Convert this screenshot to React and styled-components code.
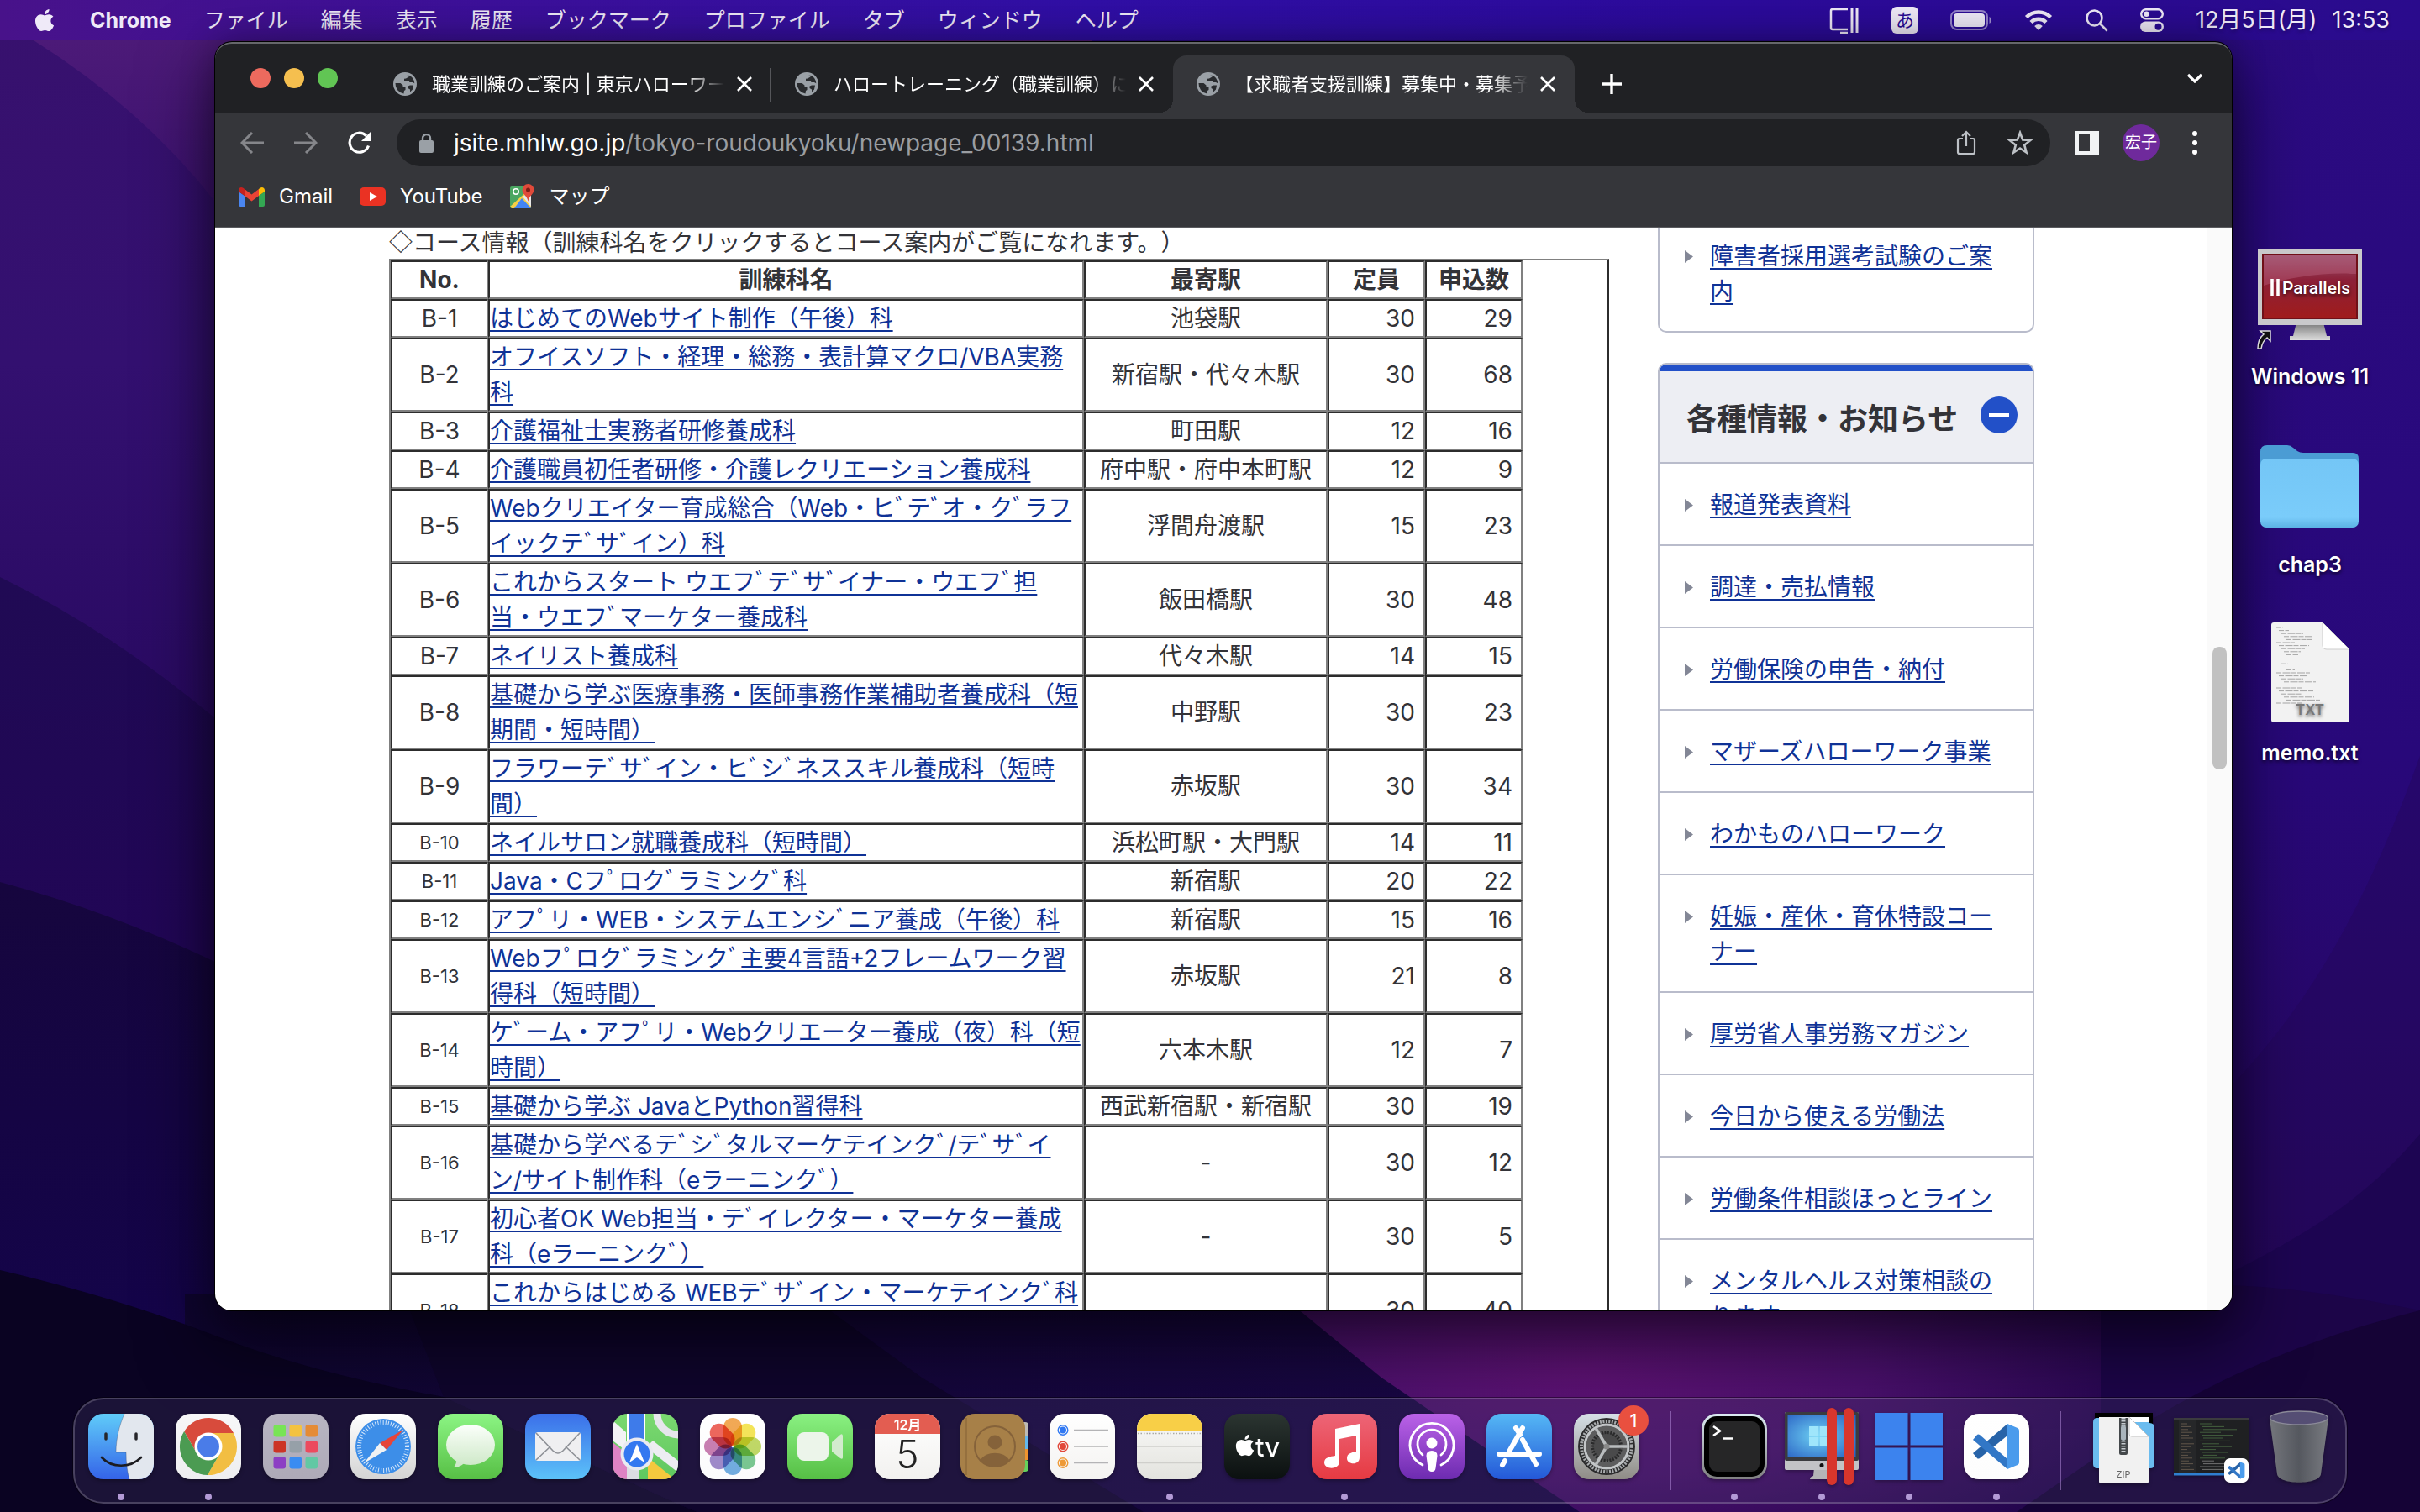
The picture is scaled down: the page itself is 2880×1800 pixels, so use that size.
import React from 'react';
import styled, { createGlobalStyle, css } from 'styled-components';
import { FaApple } from 'react-icons/fa';

const JP = `Inter, 'Noto Sans CJK JP', sans-serif`;

const GlobalStyle = createGlobalStyle`
  *, *::before, *::after { box-sizing: border-box; }
  html, body, #root { height: 100%; }
  body { margin: 0; overflow: hidden; font-family: ${JP}; text-spacing-trim: space-all; }
  button { border: 0; padding: 0; background: none; color: inherit; font: inherit; }
  svg { display: block; }
`;

/* ---------- desktop ---------- */

const Desktop = styled.div`
  position: relative;
  display: flex;
  flex-direction: column;
  height: 100vh;
  overflow: hidden;
  background: #1c0858;
`;

const WallpaperArt = styled.svg`
  position: absolute;
  inset: 0;
  width: 100%;
  height: 100%;
`;

const Workspace = styled.main`
  position: relative;
  flex: 1;
  min-height: 0;
  display: flex;
  padding: 2px 38px 0 256px;
`;

function Wallpaper() {
  return (
    <WallpaperArt viewBox="0 0 2880 1800" preserveAspectRatio="none" aria-hidden="true">
      <defs>
        <linearGradient id="wpBase" gradientUnits="userSpaceOnUse" x1="0" y1="0" x2="0" y2="860">
          <stop offset="0" stopColor="#38116e" />
          <stop offset=".5" stopColor="#331070" />
          <stop offset="1" stopColor="#290a62" />
        </linearGradient>
        <linearGradient id="wpRight" x1="0" y1="0" x2="0" y2="1">
          <stop offset="0" stopColor="#2b0b82" />
          <stop offset=".5" stopColor="#28087a" />
          <stop offset=".8" stopColor="#26075f" />
          <stop offset="1" stopColor="#1c0450" />
        </linearGradient>
        <linearGradient id="wpTop" gradientUnits="userSpaceOnUse" x1="0" y1="48" x2="0" y2="300">
          <stop offset="0" stopColor="#4c1a78" />
          <stop offset="1" stopColor="#38106e" />
        </linearGradient>
        <linearGradient id="wpMid" gradientUnits="userSpaceOnUse" x1="0" y1="690" x2="0" y2="1140">
          <stop offset="0" stopColor="#200a54" />
          <stop offset="1" stopColor="#210656" />
        </linearGradient>
        <linearGradient id="wpLow" gradientUnits="userSpaceOnUse" x1="0" y1="1050" x2="0" y2="1600">
          <stop offset="0" stopColor="#16063e" />
          <stop offset="1" stopColor="#14044a" />
        </linearGradient>
        <radialGradient id="wpMagenta" gradientUnits="userSpaceOnUse" cx="0" cy="0" r="1" gradientTransform="translate(1880 1630) scale(680 260)">
          <stop offset="0" stopColor="#5e1274" />
          <stop offset=".5" stopColor="#4a106c" />
          <stop offset="1" stopColor="#24064e" />
        </radialGradient>
        <linearGradient id="wpNavy" x1="0" y1="0" x2="1" y2="0">
          <stop offset="0" stopColor="#0f0530" />
          <stop offset="1" stopColor="#190744" />
        </linearGradient>
      </defs>
      <rect width="2880" height="1800" fill="url(#wpBase)" />
      <path d="M40 48Q170 130 256 240L1300 500V48Z" fill="url(#wpTop)" />
      <path d="M0 687Q130 750 256 855L1300 1200V1800H0Z" fill="url(#wpMid)" />
      <path d="M0 1050Q130 1085 256 1145L1300 1400V1800H0Z" fill="url(#wpLow)" />
      <rect x="1300" width="1580" height="1800" fill="url(#wpRight)" />
      <path d="M2880 900C2800 1120 2720 1250 2560 1380V1800H2880Z" fill="#240758" opacity=".4" />
      <path d="M2880 1350C2820 1420 2760 1470 2560 1560V1800H2880Z" fill="#1c0550" opacity=".8" />
      <path d="M220 1540H1543L1880 1800H220Z" fill="url(#wpNavy)" />
      <path d="M0 1512Q140 1545 256 1590T528 1663L806 1790L830 1800H0Z" fill="#0a0322" />
      <path d="M880 1540H960L1097 1640L1361 1800H830L806 1790L528 1663L480 1540Z" fill="#0f052c" />
      <path d="M1510 1530L1644 1640L1880 1800H2500V1530Z" fill="url(#wpMagenta)" />
      <path d="M2500 1530V1800H2880V1560C2780 1540 2700 1530 2640 1530Z" fill="#1c0548" />
      <path d="M2880 1560C2760 1590 2660 1630 2560 1690L2400 1800H2880Z" fill="#150336" />
    </WallpaperArt>
  );
}

/* ---------- menu bar ---------- */

const MenuBar = styled.header`
  position: relative;
  flex: none;
  display: flex;
  align-items: center;
  height: 48px;
  padding: 0 36px 0 38px;
  color: #efeaf8;
  font-size: 25px;
  line-height: 36px;
  text-shadow: 0 2px 4px rgba(0, 0, 0, 0.3);
  background: linear-gradient(90deg, #48128a 0%, #3c109a 20%, #300fa6 45%, #2c0b9c 70%, #2a0b8c 100%);
`;

const MenuList = styled.nav`
  display: flex;
  gap: 39px;
  margin-left: 39px;
`;

const MenuItem = styled.button`
  font-weight: ${(p) => (p.$strong ? 700 : 400)};
`;

const StatusArea = styled.div`
  display: flex;
  align-items: center;
  gap: 38px;
  margin-left: auto;
  white-space: nowrap;
`;

const InputSource = styled.span`
  display: grid;
  place-items: center;
  width: 32px;
  height: 32px;
  border-radius: 6px;
  background: #efeaf8;
  color: #2a0b94;
  font-size: 22px;
  line-height: 32px;
  text-shadow: none;
`;

const Clock = styled.time`
  display: flex;
  gap: 18px;
  font-size: 27px;
`;

const menus = ['ファイル', '編集', '表示', '履歴', 'ブックマーク', 'プロファイル', 'タブ', 'ウィンドウ', 'ヘルプ'];

function TopMenu() {
  return (
    <MenuBar>
      <FaApple size={30} aria-label="Apple" />
      <MenuList>
        <MenuItem $strong>Chrome</MenuItem>
        {menus.map((m) => <MenuItem key={m}>{m}</MenuItem>)}
      </MenuList>
      <StatusArea>
        <svg width="36" height="32" viewBox="0 0 36 32" fill="none" stroke="#efeaf8" strokeWidth="2.5" aria-hidden="true">
          <path d="M22 3H4a2 2 0 0 0-2 2v20a2 2 0 0 0 2 2h18M13 31h9" />
          <path d="M27 1v30M33 1v30" strokeWidth="3" />
        </svg>
        <InputSource>あ</InputSource>
        <svg width="50" height="24" viewBox="0 0 50 24" aria-hidden="true">
          <rect x="1" y="1" width="43" height="22" rx="7" fill="none" stroke="#efeaf8" strokeOpacity=".55" strokeWidth="2" />
          <rect x="4" y="4" width="37" height="16" rx="4" fill="#efeaf8" />
          <path d="M46.500 8c3 1.500 3 6.500 0 8z" fill="#efeaf8" fillOpacity=".6" />
        </svg>
        <svg width="34" height="26" viewBox="0 0 34 26" fill="none" stroke="#efeaf8" strokeWidth="4.500" aria-hidden="true">
          <path d="M2.500 9.500a20.500 20.500 0 0 1 29 0M8 15.500a12.800 12.800 0 0 1 18 0" />
          <path d="M17 25l-4.800-5a6.800 6.800 0 0 1 9.600 0z" fill="#efeaf8" stroke="none" />
        </svg>
        <svg width="28" height="28" viewBox="0 0 28 28" fill="none" stroke="#efeaf8" strokeWidth="2.600" strokeLinecap="round" aria-hidden="true">
          <circle cx="11.500" cy="11.500" r="9" />
          <path d="M18.500 18.500l7.500 7.500" />
        </svg>
        <svg width="28" height="28" viewBox="0 0 28 28" aria-hidden="true">
          <rect x="1.200" y="1.200" width="25.600" height="11" rx="5.500" fill="none" stroke="#efeaf8" strokeWidth="2.400" />
          <circle cx="7.500" cy="6.700" r="3.200" fill="#efeaf8" />
          <rect y="15.500" width="28" height="12.500" rx="6.200" fill="#efeaf8" />
          <circle cx="21.500" cy="21.700" r="4" fill="#2a0b94" />
        </svg>
        <Clock><span>12月5日(月)</span><span>13:53</span></Clock>
      </StatusArea>
    </MenuBar>
  );
}

/* ---------- browser window ---------- */

const BrowserWindow = styled.section`
  flex: 1;
  min-width: 0;
  display: flex;
  flex-direction: column;
  overflow: hidden;
  border-radius: 20px;
  background: #35363a;
  box-shadow: 0 0 0 1px #000, 0 36px 80px 10px rgba(0, 0, 0, 0.5), 0 0 40px rgba(0, 0, 0, 0.3);
`;

const TabStrip = styled.div`
  flex: none;
  display: flex;
  align-items: flex-end;
  height: 84px;
  padding-right: 32px;
  border-top: 2px solid #66676b;
  border-radius: 20px 20px 0 0;
  background: #202124;
`;

const TrafficLights = styled.div`
  display: flex;
  gap: 16px;
  align-self: center;
  padding: 0 38px 0 42px;
`;

const Light = styled.button`
  width: 24px;
  height: 24px;
  border-radius: 50%;
  background: ${(p) => p.$tone};
`;

const TabRow = styled.div`
  display: flex;
  flex: 1;
  min-width: 0;
`;

const Tab = styled.div`
  position: relative;
  display: flex;
  align-items: center;
  flex: 0 1 478px;
  min-width: 0;
  height: 68px;
  padding: 0 20px 0 28px;
  color: #fff;
  ${(p) => p.$divided && css`
    &::after {
      content: '';
      position: absolute;
      right: 0;
      top: 15px;
      width: 2px;
      height: 40px;
      background: #55565a;
    }
  `}
  ${(p) => p.$active && css`
    border-radius: 16px 16px 0 0;
    background: #35363a;
    &::before, &::after {
      content: '';
      position: absolute;
      bottom: 0;
      width: 16px;
      height: 16px;
    }
    &::before {
      left: -16px;
      background: radial-gradient(circle at 0 0, #202124 16px, #35363a 16px);
    }
    &::after {
      right: -16px;
      background: radial-gradient(circle at 100% 0, #202124 16px, #35363a 16px);
    }
  `}
`;

const TabTitle = styled.span`
  flex: 1;
  min-width: 0;
  margin: 0 12px 0 18px;
  overflow: hidden;
  white-space: nowrap;
  font-size: 22px;
  line-height: 34px;
  mask-image: linear-gradient(90deg, #000 calc(100% - 44px), transparent);
`;

const IconButton = styled.button`
  display: grid;
  place-items: center;
  flex: none;
  width: ${(p) => p.$w || 32}px;
  height: 40px;
`;

const NewTab = styled(IconButton)`
  align-self: center;
  margin-left: 20px;
`;

const TabSearch = styled(IconButton)`
  align-self: center;
`;

const Toolbar = styled.div`
  flex: none;
  display: flex;
  align-items: center;
  height: 72px;
  padding: 0 12px;
  background: #35363a;
`;

const AddressBar = styled.div`
  display: flex;
  align-items: center;
  flex: 1;
  height: 56px;
  margin: 0 12px 0 12px;
  padding: 0 4px 0 27px;
  border-radius: 28px;
  background: #202124;
  color: #9aa0a6;
  font-size: 28px;
  line-height: 40px;
`;

const Url = styled.a`
  flex: 1;
  margin-left: 24px;
  color: #9a9da1;
  text-decoration: none;
  b { font-weight: 400; color: #fff; }
`;

const Avatar = styled.button`
  flex: none;
  width: 44px;
  height: 44px;
  margin: 0 10px;
  border-radius: 50%;
  background: #6f2a9c;
  color: #fff;
  font-size: 19px;
  line-height: 44px;
`;

const Bookmarks = styled.nav`
  flex: none;
  display: flex;
  align-items: center;
  gap: 32px;
  height: 66px;
  padding: 0 28px 8px;
  border-bottom: 2px solid #5a5b5f;
  background: #35363a;
`;

const Bookmark = styled.a`
  display: flex;
  align-items: center;
  gap: 17px;
  color: #fff;
  font-size: 24px;
  line-height: 34px;
  text-decoration: none;
`;

function Globe() {
  return (
    <svg width="28" height="28" viewBox="0 0 28 28" aria-hidden="true">
      <circle cx="14" cy="14" r="14" fill="#9aa0a6" />
      <path d="M2.500 13h6l3 2.500v2.500h3v3l-1.500 1-.5 3.500A12 12 0 0 1 2.500 13zM16 3l2.500.6v2l-3.500 2-2 .2v2.400h5.500l1 1.800h3.500l2.300 1.200a12 12 0 0 0-8-10.300zM20 15.500l-2.500 1v2.500l2.500 1.500v3l3-3 1-5z" fill="#202124" opacity=".92" />
    </svg>
  );
}

function Cross() {
  return (
    <svg width="18" height="18" viewBox="0 0 18 18" stroke="#fff" strokeWidth="2.600" aria-hidden="true">
      <path d="M1 1l16 16M17 1L1 17" />
    </svg>
  );
}

const tabs = [
  { title: '職業訓練のご案内 | 東京ハローワーク', divided: true },
  { title: 'ハロートレーニング（職業訓練）に' },
  { title: '【求職者支援訓練】募集中・募集予', active: true },
];

function BrowserChrome() {
  return (
    <>
      <TabStrip>
        <TrafficLights>
          <Light $tone="#ed6a5e" aria-label="閉じる" />
          <Light $tone="#f5bf4f" aria-label="しまう" />
          <Light $tone="#61c554" aria-label="拡大" />
        </TrafficLights>
        <TabRow>
          {tabs.map((t) => (
            <Tab key={t.title} $active={t.active} $divided={t.divided}>
              <Globe />
              <TabTitle>{t.title}</TabTitle>
              <IconButton $w={24} aria-label="タブを閉じる"><Cross /></IconButton>
            </Tab>
          ))}
          <NewTab $w={48} aria-label="新しいタブ">
            <svg width="24" height="24" viewBox="0 0 24 24" stroke="#fff" strokeWidth="3.400" aria-hidden="true">
              <path d="M12 0v24M0 12h24" />
            </svg>
          </NewTab>
        </TabRow>
        <TabSearch $w={24} aria-label="タブを検索">
          <svg width="20" height="12" viewBox="0 0 20 12" fill="none" stroke="#fff" strokeWidth="3.200" aria-hidden="true">
            <path d="M2 2l8 8 8-8" />
          </svg>
        </TabSearch>
      </TabStrip>
      <Toolbar>
        <IconButton $w={64} aria-label="戻る">
          <svg width="28" height="26" viewBox="0 0 28 26" fill="none" stroke="#85868a" strokeWidth="3" aria-hidden="true">
            <path d="M28 13H3M14 1L2 13l12 12" />
          </svg>
        </IconButton>
        <IconButton $w={64} aria-label="進む">
          <svg width="28" height="26" viewBox="0 0 28 26" fill="none" stroke="#85868a" strokeWidth="3" aria-hidden="true">
            <path d="M0 13h25M14 1l12 12-12 12" />
          </svg>
        </IconButton>
        <IconButton $w={64} aria-label="再読み込み">
          <svg width="28" height="28" viewBox="0 0 28 28" fill="none" stroke="#fff" strokeWidth="3.200" aria-hidden="true">
            <path d="M24.500 17.500a11.500 11.500 0 1 1-2.600-11.800" />
            <path d="M27 1v11H16z" fill="#fff" stroke="none" />
          </svg>
        </IconButton>
        <AddressBar>
          <svg width="17" height="23" viewBox="0 0 17 23" aria-hidden="true">
            <rect y="8" width="17" height="15" rx="2" fill="#9aa0a6" />
            <path d="M4 9V5.500a4.500 4.500 0 0 1 9 0V9" fill="none" stroke="#9aa0a6" strokeWidth="2.400" />
          </svg>
          <Url href="#"><b>jsite.mhlw.go.jp</b>/tokyo-roudoukyoku/newpage_00139.html</Url>
          <IconButton $w={64} aria-label="共有">
            <svg width="24" height="30" viewBox="0 0 24 30" fill="none" stroke="#bdc1c6" strokeWidth="2.200" aria-hidden="true">
              <path d="M8 10H4a2 2 0 0 0-2 2v14a2 2 0 0 0 2 2h16a2 2 0 0 0 2-2V12a2 2 0 0 0-2-2h-4M12 19V2M7 7l5-5 5 5" />
            </svg>
          </IconButton>
          <IconButton $w={64} aria-label="ブックマークに追加">
            <svg width="30" height="30" viewBox="0 0 30 30" fill="none" stroke="#bdc1c6" strokeWidth="2.600" aria-hidden="true">
              <path d="M15 3l3.200 8.600 9.200.4-7.200 5.700 2.400 8.900L15 21.500l-7.600 5.100 2.400-8.900L2.600 12l9.200-.4z" />
            </svg>
          </IconButton>
        </AddressBar>
        <IconButton $w={64} aria-label="サイドパネル">
          <svg width="28" height="28" viewBox="0 0 28 28" aria-hidden="true">
            <path d="M0 0h28v28H0zM4 4v20h13V4z" fill="#f1f3f4" fillRule="evenodd" />
          </svg>
        </IconButton>
        <Avatar>宏子</Avatar>
        <IconButton $w={64} aria-label="メニュー">
          <svg width="6" height="28" viewBox="0 0 6 28" fill="#fff" aria-hidden="true">
            <circle cx="3" cy="3" r="3" /><circle cx="3" cy="14" r="3" /><circle cx="3" cy="25" r="3" />
          </svg>
        </IconButton>
      </Toolbar>
      <Bookmarks>
        <Bookmark href="#">
          <svg width="31" height="23" viewBox="0 0 31 23" aria-hidden="true">
            <path d="M0 5v16a2 2 0 0 0 2 2h5V10z" fill="#4a86f0" />
            <path d="M31 5v16a2 2 0 0 1-2 2h-5V10z" fill="#34a853" />
            <path d="M24 2v8l7-5V3.500C31 .5 28-1 25.600.800z" fill="#fbbc04" />
            <path d="M7 10V2l8.500 6.400L24 2v8l-8.500 6.500z" fill="#ea4335" />
            <path d="M0 3.500V5l7 5V2L5.400.800C3-1 0 .5 0 3.500z" fill="#c5221f" />
          </svg>
          Gmail
        </Bookmark>
        <Bookmark href="#">
          <svg width="31" height="22" viewBox="0 0 31 22" aria-hidden="true">
            <rect width="31" height="22" rx="5" fill="#ea3223" />
            <path d="M12 6l9 5-9 5z" fill="#fff" />
          </svg>
          YouTube
        </Bookmark>
        <Bookmark href="#">
          <svg width="30" height="30" viewBox="0 0 30 30" aria-hidden="true">
            <rect x="1" y="3" width="25" height="26" rx="2" fill="#4ba661" />
            <path d="M1 27L24 6l2 2v20l-1 1H3z" fill="#f6cf46" />
            <path d="M6 29l9-12 11 12z" fill="#4285f4" />
            <path d="M16 15l10-6v18z" fill="#e8e8e8" />
            <circle cx="8" cy="9" r="3.200" fill="none" stroke="#fff" strokeWidth="1.600" />
            <path d="M22.500 0a7 7 0 0 1 7 7c0 5-6 7-7 14-1-7-7-9-7-14a7 7 0 0 1 7-7z" fill="#e04a3a" />
            <circle cx="22.500" cy="7" r="2.500" fill="#7c1f17" />
          </svg>
          マップ
        </Bookmark>
      </Bookmarks>
    </>
  );
}

/* ---------- web page ---------- */

const Viewport = styled.div`
  flex: 1;
  min-height: 0;
  display: flex;
  background: #fff;
`;

const Scroller = styled.div`
  flex: 1;
  min-width: 0;
  overflow: hidden;
`;

const ScrollTrack = styled.div`
  flex: none;
  width: 30px;
  padding: 498px 6px 0;
  border-left: 1px solid #e4e4e4;
  background: #fafafa;
`;

const ScrollThumb = styled.div`
  height: 146px;
  border-radius: 8px;
  background: #c1c1c1;
`;

const Page = styled.div`
  display: flex;
  gap: 58px;
  margin: -16px 205px 0 207px;
  color: #333338;
  font-size: 28px;
  line-height: 42px;
`;

const Article = styled.article`
  flex: 1;
  min-width: 0;
  padding-top: 10px;
  white-space: nowrap;
`;

const Lead = styled.p`
  margin: 0;
  font-family: 'Noto Sans CJK JP', sans-serif;
`;

const CourseTable = styled.table`
  width: 100%;
  table-layout: fixed;
  border-spacing: 0;
  border: 2px solid;
  border-color: #808080 #2c2c2c #2c2c2c #808080;
  th, td {
    padding: 0;
    border: 2px solid;
    border-color: #2c2c2c #808080 #808080 #2c2c2c;
    text-align: center;
  }
`;

const Col = styled.col`
  width: ${(p) => (p.$w ? `${p.$w}px` : 'auto')};
`;

const NumberCell = styled.td`
  font-size: ${(p) => (p.$small ? 22 : 28)}px;
`;

const NameCell = styled.td`
  && { text-align: left; }
  white-space: pre;
`;

const CountCell = styled.td`
  && { padding-right: 10px; text-align: right; }
`;

const Link = styled.a`
  color: #0f3296;
  text-decoration: underline;
  text-decoration-thickness: 2px;
  text-underline-offset: 4px;
`;

const courses = [
  ['はじめてのWebサイト制作（午後）科', '池袋駅', 30, 29],
  ['オフイスソフト・経理・総務・表計算マクロ/VBA実務\n科', '新宿駅・代々木駅', 30, 68],
  ['介護福祉士実務者研修養成科', '町田駅', 12, 16],
  ['介護職員初任者研修・介護レクリエーション養成科', '府中駅・府中本町駅', 12, 9],
  ['Webクリエイター育成総合（Web・ヒﾞテﾞオ・クﾞラフ\nイックテﾞサﾞイン）科', '浮間舟渡駅', 15, 23],
  ['これからスタート ウエフﾞテﾞサﾞイナー・ウエフﾞ担\n当・ウエフﾞマーケター養成科', '飯田橋駅', 30, 48],
  ['ネイリスト養成科', '代々木駅', 14, 15],
  ['基礎から学ぶ医療事務・医師事務作業補助者養成科（短\n期間・短時間）', '中野駅', 30, 23],
  ['フラワーテﾞサﾞイン・ヒﾞシﾞネススキル養成科（短時\n間）', '赤坂駅', 30, 34],
  ['ネイルサロン就職養成科（短時間）', '浜松町駅・大門駅', 14, 11],
  ['Java・Cフﾟロクﾞラミンクﾞ科', '新宿駅', 20, 22],
  ['アフﾟリ・WEB・システムエンシﾞニア養成（午後）科', '新宿駅', 15, 16],
  ['Webフﾟロクﾞラミンクﾞ主要4言語+2フレームワーク習\n得科（短時間）', '赤坂駅', 21, 8],
  ['ケﾞーム・アフﾟリ・Webクリエーター養成（夜）科（短\n時間）', '六本木駅', 12, 7],
  ['基礎から学ぶ JavaとPython習得科', '西武新宿駅・新宿駅', 30, 19],
  ['基礎から学べるテﾞシﾞタルマーケテインクﾞ/テﾞサﾞイ\nン/サイト制作科（eラーニンクﾞ）', '-', 30, 12],
  ['初心者OK Web担当・テﾞイレクター・マーケター養成\n科（eラーニンクﾞ）', '-', 30, 5],
  ['これからはじめる WEBテﾞサﾞイン・マーケテインクﾞ科\n（eラーニンクﾞ）', '-', 30, 40],
];

const Sidebar = styled.aside`
  flex: none;
  width: 448px;
  display: flex;
  flex-direction: column;
  gap: 36px;
`;

const Card = styled.section`
  overflow: hidden;
  border: 2px solid #b9bccb;
  border-radius: 10px;
  ${(p) => p.$continued && css`
    border-top: 0;
    border-radius: 0 0 10px 10px;
  `}
`;

const CardHeader = styled.div`
  display: flex;
  align-items: center;
  justify-content: space-between;
  height: 118px;
  padding: 0 18px 4px 32px;
  border-top: 8px solid #2250c8;
  border-bottom: 2px solid #b9bccb;
  background: #edeef3;
`;

const CardTitle = styled.h2`
  margin: 0;
  padding-top: 10px;
  font-size: 36px;
  line-height: 54px;
  white-space: nowrap;
`;

const Collapse = styled.button`
  display: grid;
  place-items: center;
  width: 44px;
  height: 44px;
  border-radius: 50%;
  background: #2250c8;
`;

const LinkList = styled.ul`
  margin: 0;
  padding: 0;
  list-style: none;
`;

const LinkItem = styled.li`
  display: flex;
  gap: 20px;
  padding: 28px 28px 26px 30px;
  & + & { border-top: 2px solid #b9bccb; }
  svg { flex: none; margin-top: 14px; }
`;

const notices = [
  '報道発表資料', '調達・売払情報', '労働保険の申告・納付', 'マザーズハローワーク事業', 'わかものハローワーク',
  '妊娠・産休・育休特設コーナー', '厚労省人事労務マガジン', '今日から使える労働法', '労働条件相談ほっとライン',
  'メンタルヘルス対策相談のります',
];

function SideLink({ children }) {
  return (
    <LinkItem>
      <svg width="10" height="15" viewBox="0 0 10 15" aria-hidden="true"><path d="M0 0l10 7.500L0 15z" fill="#838796" /></svg>
      <Link href="#">{children}</Link>
    </LinkItem>
  );
}

function WebPage() {
  return (
    <Viewport>
      <Scroller>
        <Page>
          <Article>
            <Lead>◇コース情報（訓練科名をクリックするとコース案内がご覧になれます。）</Lead>
            <CourseTable>
              <colgroup>
                <Col $w={116} /><Col $w={709} /><Col $w={290} /><Col $w={116} /><Col $w={116} /><Col />
              </colgroup>
              <thead>
                <tr><th>No.</th><th>訓練科名</th><th>最寄駅</th><th>定員</th><th>申込数</th></tr>
              </thead>
              <tbody>
                {courses.map(([name, station, seats, applied], i) => (
                  <tr key={name}>
                    <NumberCell $small={i > 8}>B-{i + 1}</NumberCell>
                    <NameCell><Link href="#">{name}</Link></NameCell>
                    <td>{station}</td>
                    <CountCell>{seats}</CountCell>
                    <CountCell>{applied}</CountCell>
                  </tr>
                ))}
              </tbody>
            </CourseTable>
          </Article>
          <Sidebar>
            <Card $continued>
              <LinkList><SideLink>障害者採用選考試験のご案内</SideLink></LinkList>
            </Card>
            <Card>
              <CardHeader>
                <CardTitle>各種情報・お知らせ</CardTitle>
                <Collapse aria-label="折りたたむ">
                  <svg width="24" height="4" viewBox="0 0 24 4" aria-hidden="true"><path d="M0 0h24v4H0z" fill="#fff" /></svg>
                </Collapse>
              </CardHeader>
              <LinkList>{notices.map((n) => <SideLink key={n}>{n}</SideLink>)}</LinkList>
            </Card>
          </Sidebar>
        </Page>
      </Scroller>
      <ScrollTrack><ScrollThumb /></ScrollTrack>
    </Viewport>
  );
}

/* ---------- desktop files ---------- */

const FileColumn = styled.div`
  flex: none;
  width: 186px;
  display: flex;
  flex-direction: column;
  align-items: center;
  gap: 48px;
  padding-top: 238px;
`;

const DesktopFile = styled.button`
  display: flex;
  flex-direction: column;
  align-items: center;
  gap: 16px;
  color: #fff;
  font-size: 25px;
  font-weight: 600;
  line-height: 32px;
  text-shadow: 0 2px 4px rgba(0, 0, 0, 0.7);
`;

function ParallelsMonitor() {
  return (
    <svg width="128" height="128" viewBox="0 0 128 128" aria-hidden="true">
      <defs>
        <linearGradient id="pmScreen" x1="0" y1="0" x2="0" y2="1">
          <stop offset="0" stopColor="#94506c" /><stop offset=".4" stopColor="#8c2038" /><stop offset="1" stopColor="#a01c1c" />
        </linearGradient>
        <linearGradient id="pmStand" x1="0" y1="0" x2="0" y2="1">
          <stop offset="0" stopColor="#777" /><stop offset="1" stopColor="#ddd" />
        </linearGradient>
      </defs>
      <path d="M48 96h32l4 16h4v5H40v-5h4z" fill="url(#pmStand)" />
      <rect x="2" y="8" width="124" height="91" fill="#c9c9cb" />
      <rect x="7" y="14" width="114" height="78" fill="#701018" />
      <rect x="9" y="16" width="110" height="74" fill="url(#pmScreen)" />
      <path d="M9 16h110v22C80 36 40 42 9 52z" fill="#c8708c" opacity=".35" />
      <path d="M19 44v20M26 44v20" stroke="#fff" strokeWidth="3.500" />
      <text x="31" y="62" fill="#fff" fontFamily="Roboto, sans-serif" fontWeight="500" fontSize="21">Parallels</text>
      <path d="M2 127c0-9 3-14 7-17l-4-4h12v12l-4-4c-4 3-6 7-7 13z" fill="#111" stroke="#ddd" strokeWidth="1.500" />
    </svg>
  );
}

function Folder() {
  return (
    <svg width="128" height="128" viewBox="0 0 128 128" aria-hidden="true">
      <defs>
        <linearGradient id="fdFront" x1="0" y1="0" x2="0" y2="1">
          <stop offset="0" stopColor="#74c6f6" /><stop offset=".85" stopColor="#7accfa" /><stop offset="1" stopColor="#5cb2e4" />
        </linearGradient>
      </defs>
      <path d="M5 26q0-8 8-8h24q4 0 7 3l5 4q3 2 7 2h59q7 0 7 7v66H5z" fill="#4b9cd4" />
      <rect x="5" y="34" width="117" height="82" rx="7" fill="url(#fdFront)" />
    </svg>
  );
}

function TextFile() {
  const widths = [8, 12, 26, 34, 30, 22, 36, 28, 20, 14, 0, 0, 8, 0, 10, 40, 34, 26, 38, 0, 30, 42, 24, 36, 40, 30, 0, 0, 0];
  return (
    <svg width="128" height="128" viewBox="0 0 128 128" aria-hidden="true">
      <path d="M18 8q0-3 3-3h58l32 32v84q0 3-3 3H21q-3 0-3-3z" fill="#f2f2f2" />
      {widths.map((w, i) => <path key={i} d={`M${24 + (i % 5) * 3} ${11 + i * 3.6}h${w}`} stroke="#a4a4a4" strokeWidth="1" strokeDasharray="6 1.500 9 1" />)}
      <path d="M79 5l32 32H84q-5 0-5-5z" fill="#fff" stroke="#ccc" />
      <text x="64" y="115" textAnchor="middle" fill="#777" fontFamily="Inter, sans-serif" fontSize="17">TXT</text>
    </svg>
  );
}

/* ---------- dock ---------- */

const DockArea = styled.footer`
  position: relative;
  flex: none;
  display: flex;
  justify-content: center;
  padding: 104px 0 10px;
`;

const DockShelf = styled.div`
  display: flex;
  height: 126px;
  padding: 0 3px;
  border: 2px solid rgba(255, 255, 255, 0.2);
  border-radius: 36px;
  background: rgba(70, 55, 105, 0.3);
  box-shadow: 0 0 0 1px rgba(0, 0, 0, 0.4);
`;

const DockItem = styled.button`
  position: relative;
  display: flex;
  justify-content: center;
  width: 104px;
  padding-top: 17px;
  svg { overflow: visible; filter: drop-shadow(0 2px 2px rgba(0, 0, 0, 0.3)); }
  ${(p) => p.$running && css`
    &::after {
      content: '';
      position: absolute;
      bottom: 2px;
      left: 48px;
      width: 8px;
      height: 8px;
      border-radius: 50%;
      background: #b39ad6;
    }
  `}
`;

const Badge = styled.span`
  position: absolute;
  top: 7px;
  right: 2px;
  width: 36px;
  height: 36px;
  border-radius: 50%;
  background: #e9503f;
  color: #fff;
  font-size: 22px;
  line-height: 36px;
`;

const DockDivider = styled.hr`
  width: 2px;
  height: 94px;
  margin: 14px 23px;
  border: 0;
  background: rgba(190, 150, 230, 0.5);
`;

function Tile({ id, from, to, children }) {
  return (
    <svg width="78" height="78" viewBox="0 0 78 78" aria-hidden="true">
      <defs>
        <linearGradient id={`${id}G`} x1="0" y1="0" x2="0" y2="1">
          <stop offset="0" stopColor={from} /><stop offset="1" stopColor={to} />
        </linearGradient>
        <clipPath id={`${id}C`}><rect width="78" height="78" rx="18" /></clipPath>
      </defs>
      <g clipPath={`url(#${id}C)`}>
        <rect width="78" height="78" fill={`url(#${id}G)`} />
        {children}
      </g>
    </svg>
  );
}

const Finder = () => (
  <Tile id="finder" from="#60ccf9" to="#3463e8">
    <path d="M43 0C37 14 33 30 33 46h12c0 12 1 22 4 32h29V0z" fill="#e2e7ee" />
    <path d="M43 0C37 14 33 30 33 46h12c0 12 1 22 4 32" fill="none" stroke="#3b4a66" strokeOpacity=".35" />
    <path d="M21 24v6M57 24v6" stroke="#26262a" strokeWidth="3.500" strokeLinecap="round" />
    <path d="M16 52c12 13 34 13 47 0" fill="none" stroke="#1c1c20" strokeWidth="2.600" strokeLinecap="round" />
  </Tile>
);

const Chrome = () => (
  <Tile id="chrome" from="#f7f7f8" to="#eeeef0">
    <g transform="translate(39 39)">
      <path d="M-28.900-18A34 34 0 0 1 30-16L0-16 0 0-13.900 8z" fill="#d84b3c" />
      <path d="M30-16A34 34 0 0 1-1.100 34L13.900 8 0 0 0-16z" fill="#f2be42" />
      <path d="M-1.100 34A34 34 0 0 1-28.900-18L-13.900 8 0 0 13.900 8z" fill="#4b9b52" />
      <circle r="16.500" fill="#fff" /><circle r="13" fill="#4a7ce8" />
    </g>
  </Tile>
);

const padColors = ['#78e455', '#f3c240', '#e58b35', '#cc3426', '#96a0a8', '#ec4a5e', '#8c3ec4', '#3a8cf2', '#62c8a4'];
const Launchpad = () => (
  <Tile id="pad" from="#b8b5c2" to="#aeaab8">
    {padColors.map((c, i) => <rect key={c} x={12.500 + (i % 3) * 19} y={13 + Math.floor(i / 3) * 19} width="14.500" height="14.500" rx="3" fill={c} />)}
  </Tile>
);

const Safari = () => (
  <Tile id="safari" from="#fff" to="#d4d4d4">
    <circle cx="39" cy="39" r="33" fill="#3d8ee8" />
    <circle cx="39" cy="39" r="28.500" fill="none" stroke="#fff" strokeOpacity=".8" strokeWidth="5" strokeDasharray="1 2.110" />
    <path d="M63 19L43 43l-8-8z" fill="#e5453a" /><path d="M16 59L35 35l8 8z" fill="#f1f2f3" />
  </Tile>
);

const Messages = () => (
  <Tile id="msg" from="#8cf584" to="#57bf45">
    <defs>
      <linearGradient id="msgB" x1="0" y1="0" x2="0" y2="1"><stop offset="0" stopColor="#fbfffa" /><stop offset="1" stopColor="#cfe9c9" /></linearGradient>
    </defs>
    <path d="M22 52c1 6-1 9-3 12 6 0 11-3 14-7z" fill="#cfe9c9" />
    <ellipse cx="39" cy="37" rx="29" ry="24" fill="url(#msgB)" />
  </Tile>
);

const Mail = () => (
  <Tile id="mail" from="#3b6fe9" to="#5cc2f9">
    <rect x="12" y="22" width="54" height="34" rx="3" fill="#efeff1" />
    <path d="M13 23l20 21q6 6 12 0l20-21M13 55l17-16M65 55L48 39" fill="none" stroke="#8d9096" strokeWidth="1.600" />
  </Tile>
);

const Maps = () => (
  <Tile id="maps" from="#7bd970" to="#5fc75f">
    <path d="M0 8l16 14v22L0 32z" fill="#f3f3f5" /><path d="M0 34l17 14v30H0z" fill="#de83c4" />
    <path d="M17 60h14v18H17z" fill="#dcdde3" /><path d="M42 52l32 26H42z" fill="#f4c83e" />
    <path d="M17 0h22v60H17z" fill="#fff" /><path d="M20 0h17v60H20z" fill="#3e7bea" />
    <path d="M40 40l38 30v-14L48 32z" fill="#ededf2" />
    <circle cx="78" cy="0" r="25" fill="none" stroke="#e6e6ec" strokeWidth="9" />
    <circle cx="29" cy="48" r="19.500" fill="#e9eaf1" /><circle cx="29" cy="48" r="15.500" fill="#3478f0" />
    <path d="M29 36l9 22-9-6-9 6z" fill="#fff" />
  </Tile>
);

const petals = ['#f09a37', '#f2e13c', '#b6d34c', '#63c07f', '#5aa0dc', '#8f76c2', '#c068a4', '#ea4c40'];
const Petal = styled.rect`
  mix-blend-mode: multiply;
`;
const Photos = () => (
  <Tile id="photos" from="#fff" to="#fbfbfc">
    {petals.map((c, i) => <Petal key={c} x="28" y="5" width="22" height="33" rx="11" fill={c} opacity=".85" transform={`rotate(${i * 45} 39 39)`} />)}
  </Tile>
);

const FaceTime = () => (
  <Tile id="ft" from="#8af182" to="#56bf45">
    <rect x="12" y="22" width="37" height="34" rx="8" fill="#ecf5ea" />
    <path d="M53 34l10-9q3-2 3 2v25q0 3-3 1l-10-8z" fill="#d2ebcd" />
  </Tile>
);

const Calendar = () => (
  <Tile id="cal" from="#fff" to="#f2f1ef">
    <rect width="78" height="24" fill="#e35d51" />
    <text x="39" y="19" textAnchor="middle" fill="#fff" fontFamily={JP} fontWeight="600" fontSize="16">12月</text>
    <text x="39" y="65" textAnchor="middle" fill="#222" fontFamily="Inter, sans-serif" fontWeight="300" fontSize="46">5</text>
  </Tile>
);

const Contacts = () => (
  <svg width="84" height="78" viewBox="0 0 84 78" aria-hidden="true">
    <rect x="66" y="10" width="16" height="17" rx="4" fill="#bdbab4" /><rect x="66" y="27" width="16" height="15" fill="#62b8ee" />
    <rect x="66" y="42" width="16" height="13" fill="#f0932e" /><rect x="66" y="55" width="16" height="14" rx="4" fill="#65d15c" />
    <rect x="1" width="77" height="78" rx="17" fill="#a78048" />
    <path d="M8 5v68" stroke="#8f6b3b" strokeWidth="1.500" />
    <circle cx="42" cy="39" r="24" fill="none" stroke="#85623a" strokeWidth="2" />
    <circle cx="42" cy="34" r="8.500" fill="#85623a" /><path d="M25 55c6-11 28-11 34 0-8 10-26 10-34 0z" fill="#85623a" />
  </svg>
);

const Reminders = () => (
  <Tile id="rem" from="#fff" to="#f4f3f1">
    {['#3078f2', '#e2473a', '#ee9a37'].map((c, i) => (
      <g key={c} transform={`translate(0 ${19.500 + i * 19.500})`}>
        <circle cx="16" r="5.800" fill="none" stroke={c} strokeWidth="1.400" /><circle cx="16" r="4" fill={c} />
        <path d="M29 0h41" stroke="#b4b4b6" strokeWidth="1.600" />
      </g>
    ))}
  </Tile>
);

const Notes = () => (
  <Tile id="notes" from="#fafaf9" to="#e3e3de">
    <rect width="78" height="20" fill="#f8cf47" /><path d="M0 20.500h78" stroke="#a58d3c" />
    <path d="M1 23.500h77" stroke="#a9a9a5" strokeWidth="1.400" strokeDasharray="1.500 2" />
    <path d="M0 39h78M0 58.500h78" stroke="#cfcfcb" strokeWidth="1.600" />
  </Tile>
);

const AppleTv = () => (
  <Tile id="tv" from="#2b3531" to="#0b1010">
    <FaApple x="10" y="23" size={29} color="#fff" />
    <text x="37" y="51" fill="#fff" fontFamily="Inter, sans-serif" fontWeight="500" fontSize="31">tv</text>
  </Tile>
);

const Music = () => (
  <Tile id="music" from="#ed6577" to="#e63a42">
    <path d="M28 18l29-6v40c0 10-15 9-15 1 0-6 6-7 11-8V26l-20 4v27c0 10-18 10-18 1 0-6 7-7 13-8z" fill="#fff" />
  </Tile>
);

const Podcasts = () => (
  <Tile id="pod" from="#bb62e8" to="#6d2bb0">
    <g fill="none" stroke="#fff" strokeWidth="2.800" strokeLinecap="round">
      <path d="M28 61a26 26 0 1 1 22 0" /><path d="M28 49a17 17 0 1 1 22 0" />
    </g>
    <circle cx="39" cy="35" r="6.500" fill="#fff" /><path d="M32.500 50q0-6 6.500-6t6.500 6l-2 15q-.5 4-4.500 4t-4.500-4z" fill="#fff" />
  </Tile>
);

const AppStore = () => (
  <Tile id="store" from="#55b8f5" to="#2458d8">
    <g stroke="#fff" strokeWidth="6" strokeLinecap="round">
      <path d="M43 17L27 45M35 17l5 8M43 31l16 29M15 48h48" /><path d="M22 56l-3 5" />
    </g>
  </Tile>
);

const Settings = () => (
  <Tile id="set" from="#d6dfe6" to="#8f8c86">
    <circle cx="39" cy="39" r="34" fill="#2b2b2c" />
    <circle cx="39" cy="39" r="30" fill="none" stroke="#a8abad" strokeWidth="4" strokeDasharray="2 1.500" />
    <circle cx="39" cy="39" r="26" fill="#5d5d5e" stroke="#c3c6c8" strokeWidth="3" />
    <circle cx="39" cy="39" r="17" fill="#4a4a4b" stroke="#2a2a2b" strokeWidth="4" strokeDasharray="2 1.500" />
    <path d="M39 39h26M39 39L26 17M39 39L26 61" stroke="#b9bcbe" strokeWidth="3.500" />
    <circle cx="39" cy="39" r="3.500" fill="#888" />
  </Tile>
);

const Terminal = () => (
  <Tile id="term" from="#dcebf2" to="#7f7f80">
    <rect x="3" y="3" width="72" height="72" rx="15" fill="#000" /><rect x="9" y="9" width="60" height="60" rx="9" fill="#262627" />
    <path d="M14 15l8 5.500-8 5.500M26 29.500h11" fill="none" stroke="#fff" strokeWidth="2.600" />
  </Tile>
);

const WinPanes = ({ x, y, s, fill }) => (
  <g fill={fill} transform={`translate(${x} ${y}) scale(${s})`}>
    <path d="M0 0h38.500v38.500H0zM41.500 0H80v38.500H41.500zM0 41.500h38.500V80H0zM41.500 41.500H80V80H41.500z" />
  </g>
);

const Parallels = () => (
  <svg width="88" height="78" viewBox="0 0 88 78" aria-hidden="true">
    <defs>
      <radialGradient id="parG" cx=".45" cy=".5" r=".7"><stop offset="0" stopColor="#6fd3f4" /><stop offset="1" stopColor="#2a62c4" /></radialGradient>
    </defs>
    <path d="M35 64h22l2 14H30q0-3 4-4z" fill="#b4b4b6" />
    <rect y="-2" width="88" height="69" rx="2" fill="#c2c3c6" /><rect y="-2" width="88" height="58" rx="2" fill="#3a3b3f" />
    <rect x="3.500" y="1" width="81" height="51" fill="url(#parG)" />
    <WinPanes x="29" y="15" s={0.3} fill="#9fe6fb" />
    <circle cx="44" cy="61.500" r="2.500" fill="#111" />
    <rect x="50" y="-7" width="12" height="92" rx="6" fill="#d8362c" /><rect x="70" y="-7" width="12" height="92" rx="6" fill="#d8362c" />
  </svg>
);

const Windows = () => (
  <svg width="80" height="80" viewBox="0 0 80 80" aria-hidden="true"><WinPanes x="0" y="-1" s={1} fill="#3c83ee" /></svg>
);

const VsLogo = () => (
  <g>
    <path d="M11 47l5 6q1 1 3 0L52 26V12z" fill="#2763a8" />
    <path d="M11 31l5-6q1-1 3 0l33 29v12z" fill="#3277c6" />
    <path d="M52 12l12 5q2 1 2 3v38q0 2-2 3l-12 5q-1 .5-1-1V13q0-1 1-1z" fill="#4a9bec" />
  </g>
);

const VsCode = () => <Tile id="vs" from="#fff" to="#fdfdfd"><VsLogo /></Tile>;

const Zip = () => (
  <svg width="74" height="84" viewBox="0 0 74 84" aria-hidden="true">
    <path d="M2-1h69v20H2z" fill="#000" />
    <path d="M0 10q0-5 5-5h62v6q6 0 6 6v43q0 5-5 5H5q-5 0-5-5z" fill="#6bbcef" />
    <path d="M2-1h69v11H66V4H7V-1z" fill="#000" /><path d="M7 4h59v6H7z" fill="#fff" />
    <path d="M7 6q0-2 2-2h34l23 23v54q0 2-2 2H9q-2 0-2-2z" fill="#f1f1f1" />
    <path d="M43 4l23 23H46q-3 0-3-3z" fill="#fff" stroke="#c6c6c6" />
    <path d="M31 5h10v42q0 2-2 2h-6q-2 0-2-2z" fill="#44484b" /><path d="M36 5v42" stroke="#c6cbd0" strokeWidth="5" strokeDasharray="1.500 1.500" />
    <rect x="33" y="14" width="6" height="18" rx="3" fill="#a9b4bb" />
    <text x="36" y="76" textAnchor="middle" fill="#666" fontFamily="Inter, sans-serif" fontSize="11">ZIP</text>
  </svg>
);

const EditorWindow = () => (
  <svg width="90" height="78" viewBox="0 0 90 78" aria-hidden="true">
    <rect y="5" width="90" height="68" fill="#1f2022" /><rect y="5" width="90" height="3" fill="#3b3b3e" />
    <rect y="71" width="90" height="2.500" fill="#2f7fd0" /><rect x="6" y="8" width="21" height="63" fill="#262729" />
    {Array.from({ length: 17 }, (_, i) => (
      <g key={i} strokeWidth="1">
        <path d={`M8 ${12 + i * 3.400}h${8 + (i * 5) % 9}`} stroke="#7a6a58" strokeOpacity=".7" />
        <path d={`M${31 + (i % 3) * 2} ${12 + i * 3.400}h${14 + (i * 13) % 28}`} stroke={i > 12 ? '#a7a7a7' : '#5c8a52'} strokeOpacity=".6" />
      </g>
    ))}
    <rect x="60" y="53" width="29" height="29" rx="7" fill="#fff" />
    <g transform="translate(60 53) scale(.37)"><VsLogo /></g>
  </svg>
);

const Trash = () => (
  <svg width="70" height="84" viewBox="0 0 70 84" aria-hidden="true">
    <defs>
      <linearGradient id="trG" x1="0" y1="0" x2="1" y2="0"><stop offset="0" stopColor="#74767c" /><stop offset=".5" stopColor="#55585f" /><stop offset="1" stopColor="#797b81" /></linearGradient>
    </defs>
    <path d="M0 6l9 66c2 13 50 13 52 0l9-66z" fill="url(#trG)" />
    <ellipse cx="35" cy="5" rx="34.500" ry="8" fill="#554e74" stroke="#8b8a98" strokeWidth="1.400" />
  </svg>
);

const apps = [
  ['Finder', Finder, true], ['Google Chrome', Chrome, true], ['Launchpad', Launchpad], ['Safari', Safari], ['メッセージ', Messages],
  ['メール', Mail], ['マップ', Maps], ['写真', Photos], ['FaceTime', FaceTime], ['カレンダー', Calendar], ['連絡先', Contacts],
  ['リマインダー', Reminders], ['メモ', Notes, true], ['TV', AppleTv], ['ミュージック', Music, true], ['Podcast', Podcasts],
  ['App Store', AppStore], ['システム環境設定', Settings, false, 1],
];
const recents = [['ターミナル', Terminal, true], ['Parallels', Parallels, true], ['Windows 11', Windows, true], ['Code', VsCode, true]];
const stacks = [['ダウンロード', Zip], ['ウインドウ', EditorWindow], ['ゴミ箱', Trash]];

function DockGroup({ items }) {
  return items.map(([label, Icon, running, badge]) => (
    <DockItem key={label} aria-label={label} $running={running}>
      <Icon />
      {badge && <Badge>{badge}</Badge>}
    </DockItem>
  ));
}

export default function App() {
  return (
    <>
      <GlobalStyle />
      <Desktop>
        <Wallpaper />
        <TopMenu />
        <Workspace>
          <BrowserWindow>
            <BrowserChrome />
            <WebPage />
          </BrowserWindow>
          <FileColumn>
            <DesktopFile><ParallelsMonitor />Windows 11</DesktopFile>
            <DesktopFile><Folder />chap3</DesktopFile>
            <DesktopFile><TextFile />memo.txt</DesktopFile>
          </FileColumn>
        </Workspace>
        <DockArea>
          <DockShelf>
            <DockGroup items={apps} />
            <DockDivider />
            <DockGroup items={recents} />
            <DockDivider />
            <DockGroup items={stacks} />
          </DockShelf>
        </DockArea>
      </Desktop>
    </>
  );
}
